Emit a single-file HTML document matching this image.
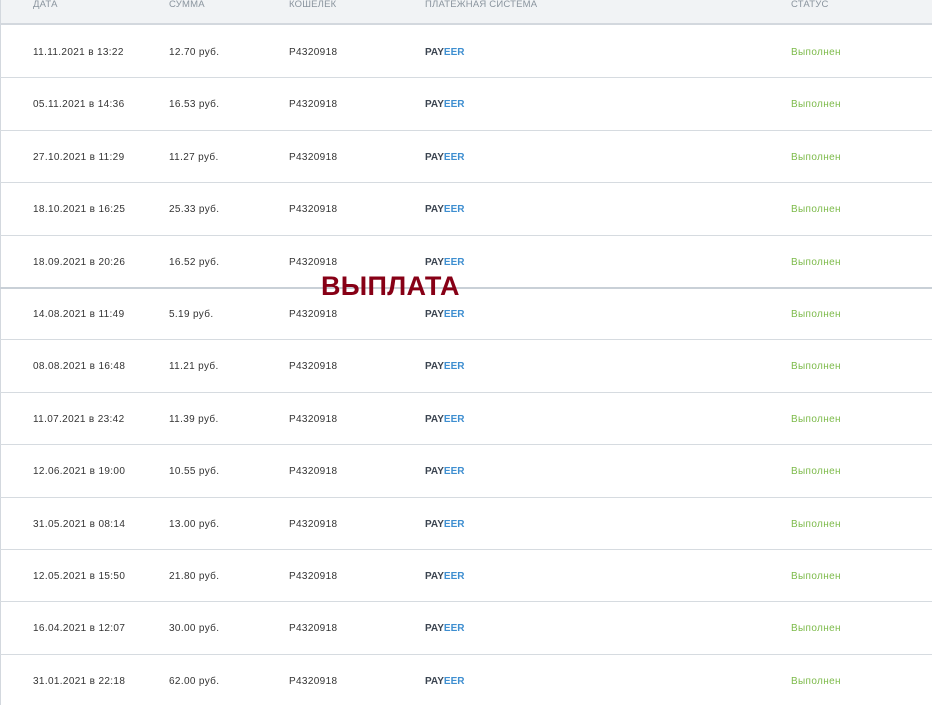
<!DOCTYPE html>
<html><head><meta charset="utf-8"><style>
body{margin:0;width:932px;height:705px;overflow:hidden;background:#fff;font-family:"Liberation Sans","DejaVu Sans",sans-serif;position:relative}
.hd{position:absolute;left:0;top:0;width:932px;height:25px;background:#f1f3f5;border-bottom:2px solid #d3d8de;box-sizing:border-box}
.lb{position:absolute;left:0;top:0;width:1px;height:705px;background:#d3d8de}
.t{position:absolute;font-size:10px;color:#333;white-space:nowrap;line-height:12px;letter-spacing:0.35px}
.h{color:#8a949e;font-size:9.5px;letter-spacing:0.2px}
.line{position:absolute;left:0;width:932px;height:1px;background:#d6dbe0}
.g{color:#7cba49}
.p{font-weight:bold;color:#3b4450;letter-spacing:0}.p b{color:#3e8ed0}
.w{position:absolute;left:321px;top:271px;font-size:27px;font-weight:bold;color:#870016;letter-spacing:0.3px}
</style></head><body>
<div class="hd"></div><div class="lb"></div>
<div class="t h" style="left:33px;top:-1px">ДАТА</div>
<div class="t h" style="left:169px;top:-1px">СУММА</div>
<div class="t h" style="left:289px;top:-1px">КОШЕЛЕК</div>
<div class="t h" style="left:425px;top:-1px">ПЛАТЕЖНАЯ СИСТЕМА</div>
<div class="t h" style="left:791px;top:-1px">СТАТУС</div>
<div id="rows"></div>
<script>
var d=[["11.11.2021 в 13:22","12.70"],["05.11.2021 в 14:36","16.53"],["27.10.2021 в 11:29","11.27"],["18.10.2021 в 16:25","25.33"],["18.09.2021 в 20:26","16.52"],["14.08.2021 в 11:49","5.19"],["08.08.2021 в 16:48","11.21"],["11.07.2021 в 23:42","11.39"],["12.06.2021 в 19:00","10.55"],["31.05.2021 в 08:14","13.00"],["12.05.2021 в 15:50","21.80"],["16.04.2021 в 12:07","30.00"],["31.01.2021 в 22:18","62.00"]];
var h="";
for(var i=0;i<d.length;i++){var c=51+i*52.4,y=Math.round(c-4);
if(i>0)h+='<div class="line" style="top:'+Math.round(25+i*52.4)+'px;'+(i==5?'height:2px;background:#c9d0d7':'')+'"></div>';
h+='<div class="t" style="left:33px;top:'+y+'px">'+d[i][0]+'</div><div class="t" style="left:169px;top:'+y+'px">'+d[i][1]+' руб.</div><div class="t" style="left:289px;top:'+y+'px">P4320918</div><div class="t p" style="left:425px;top:'+y+'px">PAY<b>EER</b></div><div class="t g" style="left:791px;top:'+y+'px">Выполнен</div>';}
document.getElementById("rows").innerHTML=h;
</script>
<div class="w">ВЫПЛАТА</div>
</body></html>
